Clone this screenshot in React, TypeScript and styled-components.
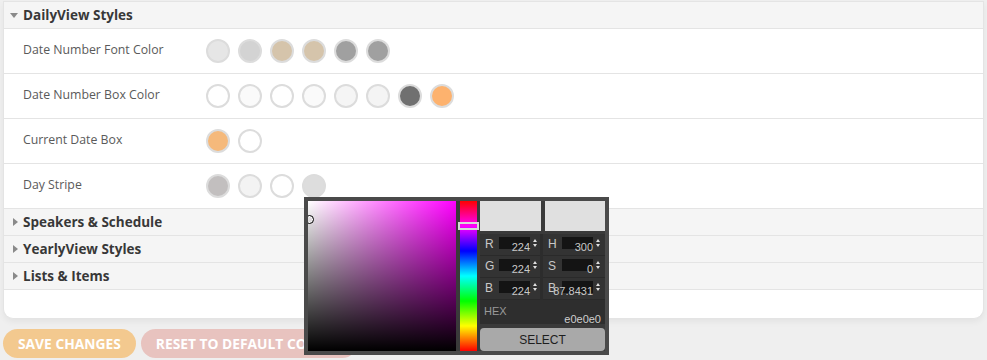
import React from "react";
import styled, { createGlobalStyle } from "styled-components";

const Global = createGlobalStyle`
  html, body { margin: 0; padding: 0; background: #efefef; }
  body { font-family: "Open Sans", "Noto Sans", Arial, sans-serif; }
  * { box-sizing: border-box; }
`;

const Page = styled.div`
  position: relative;
  width: 987px;
  height: 360px;
  overflow: hidden;
  padding: 1px 3px 0 3px;
`;

const Card = styled.div`
  background: #fff;
  border: 1px solid #e4e4e4;
  border-top: none;
  border-radius: 0 0 10px 10px;
  box-shadow: 0 3px 6px rgba(0, 0, 0, 0.05);
  padding-bottom: 28px;
`;

const Header = styled.div<{ $first?: boolean }>`
  height: ${(p) => (p.$first ? 28 : 27)}px;
  display: flex;
  align-items: center;
  background: #f5f5f5;
  border-top: ${(p) => (p.$first ? "1px solid #e4e4e4" : "none")};
  border-bottom: 1px solid #e4e4e4;
  padding-left: 3px;
  font-weight: 700;
  font-size: 13.5px;
  color: #383838;
`;

const Caret = styled.span<{ $open?: boolean }>`
  width: 16px;
  display: flex;
  align-items: center;
  justify-content: center;
  &::before {
    content: "";
    display: block;
    ${(p) =>
      p.$open
        ? `border-left: 4.5px solid transparent; border-right: 4.5px solid transparent; border-top: 5px solid #8a8a8a; margin-right: 2px;`
        : `border-top: 4.5px solid transparent; border-bottom: 4.5px solid transparent; border-left: 5px solid #8a8a8a; margin-left: 1px;`}
  }
`;

const Row = styled.div`
  height: 45px;
  display: flex;
  align-items: center;
  border-bottom: 1px solid #e4e4e4;
  padding-left: 19px;
`;

const Label = styled.div`
  width: 183px;
  font-size: 12.3px;
  color: #5a5a5a;
  padding-bottom: 4px;
`;

const Swatches = styled.div`
  display: flex;
  gap: 8px;
`;

const Swatch = styled.div<{ $c: string }>`
  width: 24px;
  height: 24px;
  border-radius: 50%;
  background: ${(p) => p.$c};
  border: 2px solid #dcdcdc;
`;

const Buttons = styled.div`
  display: flex;
  gap: 5px;
  margin-top: 10px;
`;

const Btn = styled.div<{ $bg: string }>`
  height: 29px;
  padding: 0 15px;
  border-radius: 15px;
  background: ${(p) => p.$bg};
  color: #fff;
  font-weight: 700;
  font-size: 13.8px;
  display: flex;
  align-items: center;
  white-space: nowrap;
`;

/* Color picker overlay */
const Picker = styled.div`
  position: absolute;
  left: 304px;
  top: 197px;
  width: 305px;
  height: 158px;
  background: #3a3a3a;
  border: 4px solid #4a4a4a;
  display: flex;
  gap: 4px;
  font-family: Arial, "Liberation Sans", sans-serif;
`;

const SatBox = styled.div`
  position: relative;
  width: 148px;
  height: 150px;
  background: linear-gradient(to bottom, rgba(0, 0, 0, 0), #000),
    linear-gradient(to right, #fff, rgba(255, 255, 255, 0)), #ff00ff;
  overflow: hidden;
`;

const SatCursor = styled.div`
  position: absolute;
  left: -3px;
  top: 14px;
  width: 9px;
  height: 9px;
  border-radius: 50%;
  border: 1px solid #000;
  box-shadow: inset 0 0 0 1px #fff;
`;

const HueBar = styled.div`
  position: relative;
  width: 17px;
  height: 150px;
  background: linear-gradient(
    to bottom,
    #ff0000 0%,
    #ff00ff 16.7%,
    #0000ff 33.3%,
    #00ffff 50%,
    #00ff00 66.7%,
    #ffff00 83.3%,
    #ff0000 100%
  );
`;

const HueMark = styled.div`
  position: absolute;
  left: -2px;
  top: 21px;
  width: 21px;
  height: 8px;
  border: 2px solid #d8d8d8;
`;

const Side = styled.div`
  width: 125px;
  display: flex;
  flex-direction: column;
  margin-left: -1px;
`;

const Previews = styled.div`
  display: flex;
  gap: 4px;
  height: 30px;
`;

const Preview = styled.div`
  flex: 1;
  background: #e0e0e0;
`;

const Fields = styled.div`
  margin-top: 3px;
  display: grid;
  grid-template-columns: 60px 62px;
  column-gap: 3px;
  background: #2c2c2c;
`;

const Field = styled.div`
  height: 22px;
  display: flex;
  align-items: center;
  background: #333;
  border-bottom: 1px solid #2a2a2a;
  padding-left: 5px;
`;

const FieldLetter = styled.span`
  width: 14px;
  color: #c8c8c8;
  font-size: 12px;
`;

const FieldInput = styled.span`
  position: relative;
  width: 31px;
  height: 12px;
  background: #141414;
  margin-top: -3px;
`;

const FieldValue = styled.span`
  position: absolute;
  right: 0;
  top: 5px;
  font-size: 11px;
  color: #c8c8c8;
  line-height: 11px;
  white-space: nowrap;
`;

const Spin = styled.span`
  margin-left: 3px;
  margin-top: -3px;
  display: flex;
  flex-direction: column;
  gap: 2px;
  &::before,
  &::after {
    content: "";
    display: block;
    border-left: 2.5px solid transparent;
    border-right: 2.5px solid transparent;
  }
  &::before {
    border-bottom: 3px solid #e0e0e0;
  }
  &::after {
    border-top: 3px solid #e0e0e0;
  }
`;

const Hex = styled.div`
  height: 25px;
  background: #2e2e2e;
  position: relative;
  font-size: 11px;
`;

const HexLabel = styled.span`
  position: absolute;
  left: 4px;
  top: 5px;
  color: #9a9a9a;
`;

const HexValue = styled.span`
  position: absolute;
  right: 4px;
  top: 13px;
  color: #cfcfcf;
`;

const SelectBtn = styled.div`
  margin-top: 4px;
  height: 23px;
  background: #a9a9a9;
  border-radius: 4px;
  display: flex;
  align-items: center;
  justify-content: center;
  color: #1e1e1e;
  font-size: 12px;
`;

const rows: { label: string; colors: string[] }[] = [
  {
    label: "Date Number Font Color",
    colors: ["#e6e6e6", "#d3d3d3", "#d5c4ab", "#d5c4ab", "#a0a0a0", "#a0a0a0"],
  },
  {
    label: "Date Number Box Color",
    colors: ["#ffffff", "#fafafa", "#ffffff", "#fafafa", "#f5f5f5", "#f4f4f4", "#707070", "#fdb26e"],
  },
  { label: "Current Date Box", colors: ["#f5b97b", "#ffffff"] },
  { label: "Day Stripe", colors: ["#c2bfbf", "#f3f3f3", "#ffffff", "#dddddd"] },
];

const fields: [string, string][] = [
  ["R", "224"],
  ["H", "300"],
  ["G", "224"],
  ["S", "0"],
  ["B", "224"],
  ["B", "87.8431"],
];

export default function App() {
  return (
    <>
      <Global />
      <Page>
        <Card>
          <Header $first>
            <Caret $open />
            DailyView Styles
          </Header>
          {rows.map((r) => (
            <Row key={r.label}>
              <Label>{r.label}</Label>
              <Swatches>
                {r.colors.map((c, i) => (
                  <Swatch key={i} $c={c} />
                ))}
              </Swatches>
            </Row>
          ))}
          <Header>
            <Caret />
            Speakers &amp; Schedule
          </Header>
          <Header>
            <Caret />
            YearlyView Styles
          </Header>
          <Header>
            <Caret />
            Lists &amp; Items
          </Header>
        </Card>
        <Buttons>
          <Btn $bg="#f3c98f">SAVE CHANGES</Btn>
          <Btn $bg="#e8c3bf">RESET TO DEFAULT COLORS</Btn>
        </Buttons>
        <Picker>
          <SatBox>
            <SatCursor />
          </SatBox>
          <HueBar>
            <HueMark />
          </HueBar>
          <Side>
            <Previews>
              <Preview />
              <Preview />
            </Previews>
            <Fields>
              {fields.map(([l, v], i) => (
                <Field key={i}>
                  <FieldLetter>{l}</FieldLetter>
                  <FieldInput>
                    <FieldValue>{v}</FieldValue>
                  </FieldInput>
                  <Spin />
                </Field>
              ))}
            </Fields>
            <Hex>
              <HexLabel>HEX</HexLabel>
              <HexValue>e0e0e0</HexValue>
            </Hex>
            <SelectBtn>SELECT</SelectBtn>
          </Side>
        </Picker>
      </Page>
    </>
  );
}
